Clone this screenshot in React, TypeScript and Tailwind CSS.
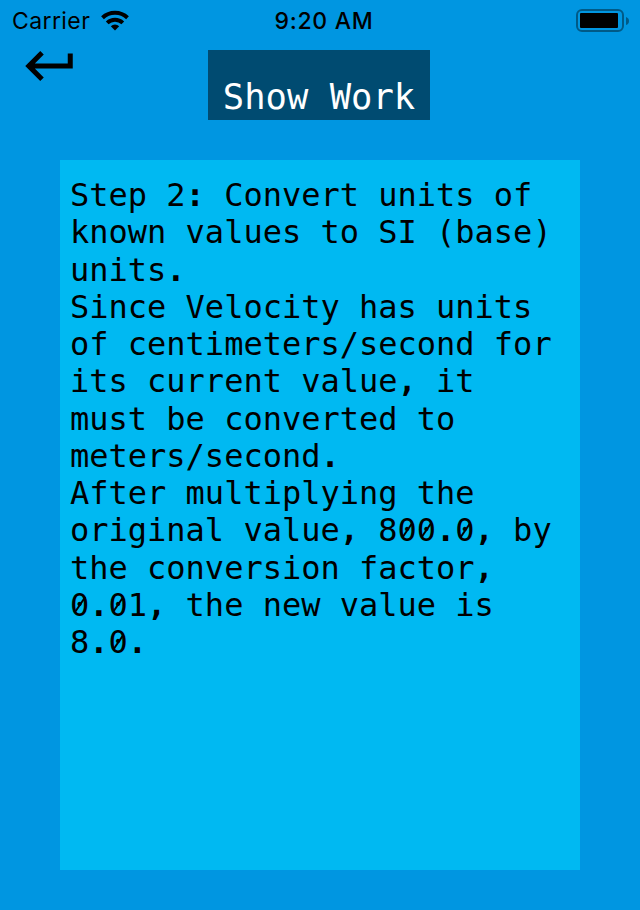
import React from "react";

const lines = [
  "Step 2: Convert units of",
  "known values to SI (base)",
  "units.",
  "Since Velocity has units",
  "of centimeters/second for",
  "its current value, it",
  "must be converted to",
  "meters/second.",
  "After multiplying the",
  "original value, 800.0, by",
  "the conversion factor,",
  "0.01, the new value is",
  "8.0.",
];

// Punctuation is set heavier than the letters around it, and zeros carry a slash.
function Line({ text }: { text: string }) {
  return (
    <div>
      {text.split(/([.,:0])/).map((part, i) => {
        if (i % 2 === 0) return part;
        if (part === "0") {
          return (
            <span key={i} className="relative">
              0
              <span className="absolute top-[17.5px] left-[1.5px] h-[2px] w-[17px] -rotate-[56deg] bg-black" />
            </span>
          );
        }
        return (
          <span key={i} className="font-bold">
            {part}
          </span>
        );
      })}
    </div>
  );
}

export default function App() {
  return (
    <div className="flex h-[910px] w-[640px] flex-col overflow-hidden bg-[#0096e1] text-black">
      <header className="grid h-10 grid-cols-3 items-center font-['Inter',sans-serif] text-[23px] leading-[40px]">
        <div className="flex items-center gap-[11px] pl-[12px]">
          <span className="pt-px tracking-[0.4px]">Carrier</span>
          <svg width="28" height="21" viewBox="0 0 28 21" fill="none" stroke="black" strokeWidth="4">
            <path d="M1.5 7.8 A18.2 18.2 0 0 1 26.5 7.8" />
            <path d="M6.2 12.9 A11.5 11.5 0 0 1 21.8 12.9" />
            <path d="M14 20.5 L9.8 16.3 A6 6 0 0 1 18.2 16.3Z" fill="black" stroke="none" />
          </svg>
        </div>
        <span className="pt-px pl-[8px] text-center font-medium tracking-[0.7px] whitespace-nowrap">9:20 AM</span>
        <div className="flex justify-end pt-px pr-[10px]">
          <svg width="54" height="24" viewBox="0 0 54 24">
            <rect x="1" y="1" width="46" height="21" rx="5" fill="none" stroke="#005a87" strokeWidth="2" />
            <rect x="4" y="4" width="38" height="15" rx="1" />
            <path d="M50 8 Q53 9 53 12 Q53 15 50 16Z" fill="#005a87" />
          </svg>
        </div>
      </header>
      <div className="flex h-[120px] items-start pt-[10px]">
        <div className="w-[208px] pt-px pl-[25px]">
          <svg width="48" height="30" viewBox="2 6 19 12" className="block">
            <path d="M19 7v4H5.83l3.58-3.59L8 6l-6 6 6 6 1.41-1.41L5.83 13H21V7z" />
          </svg>
        </div>
        <h1 className="h-[70px] w-[222px] bg-[#004b71] pt-[26px] text-center font-['DejaVu_Sans_Mono',monospace] text-[35.5px] leading-[42px] whitespace-nowrap text-white">
          Show Work
        </h1>
      </div>
      <main className="mx-[60px] h-[710px] bg-[#00b9f2] px-[10px] pt-[17px] font-['DejaVu_Sans_Mono',monospace] text-[32px] leading-[37.25px] whitespace-pre">
        {lines.map((line) => (
          <Line key={line} text={line} />
        ))}
      </main>
    </div>
  );
}
